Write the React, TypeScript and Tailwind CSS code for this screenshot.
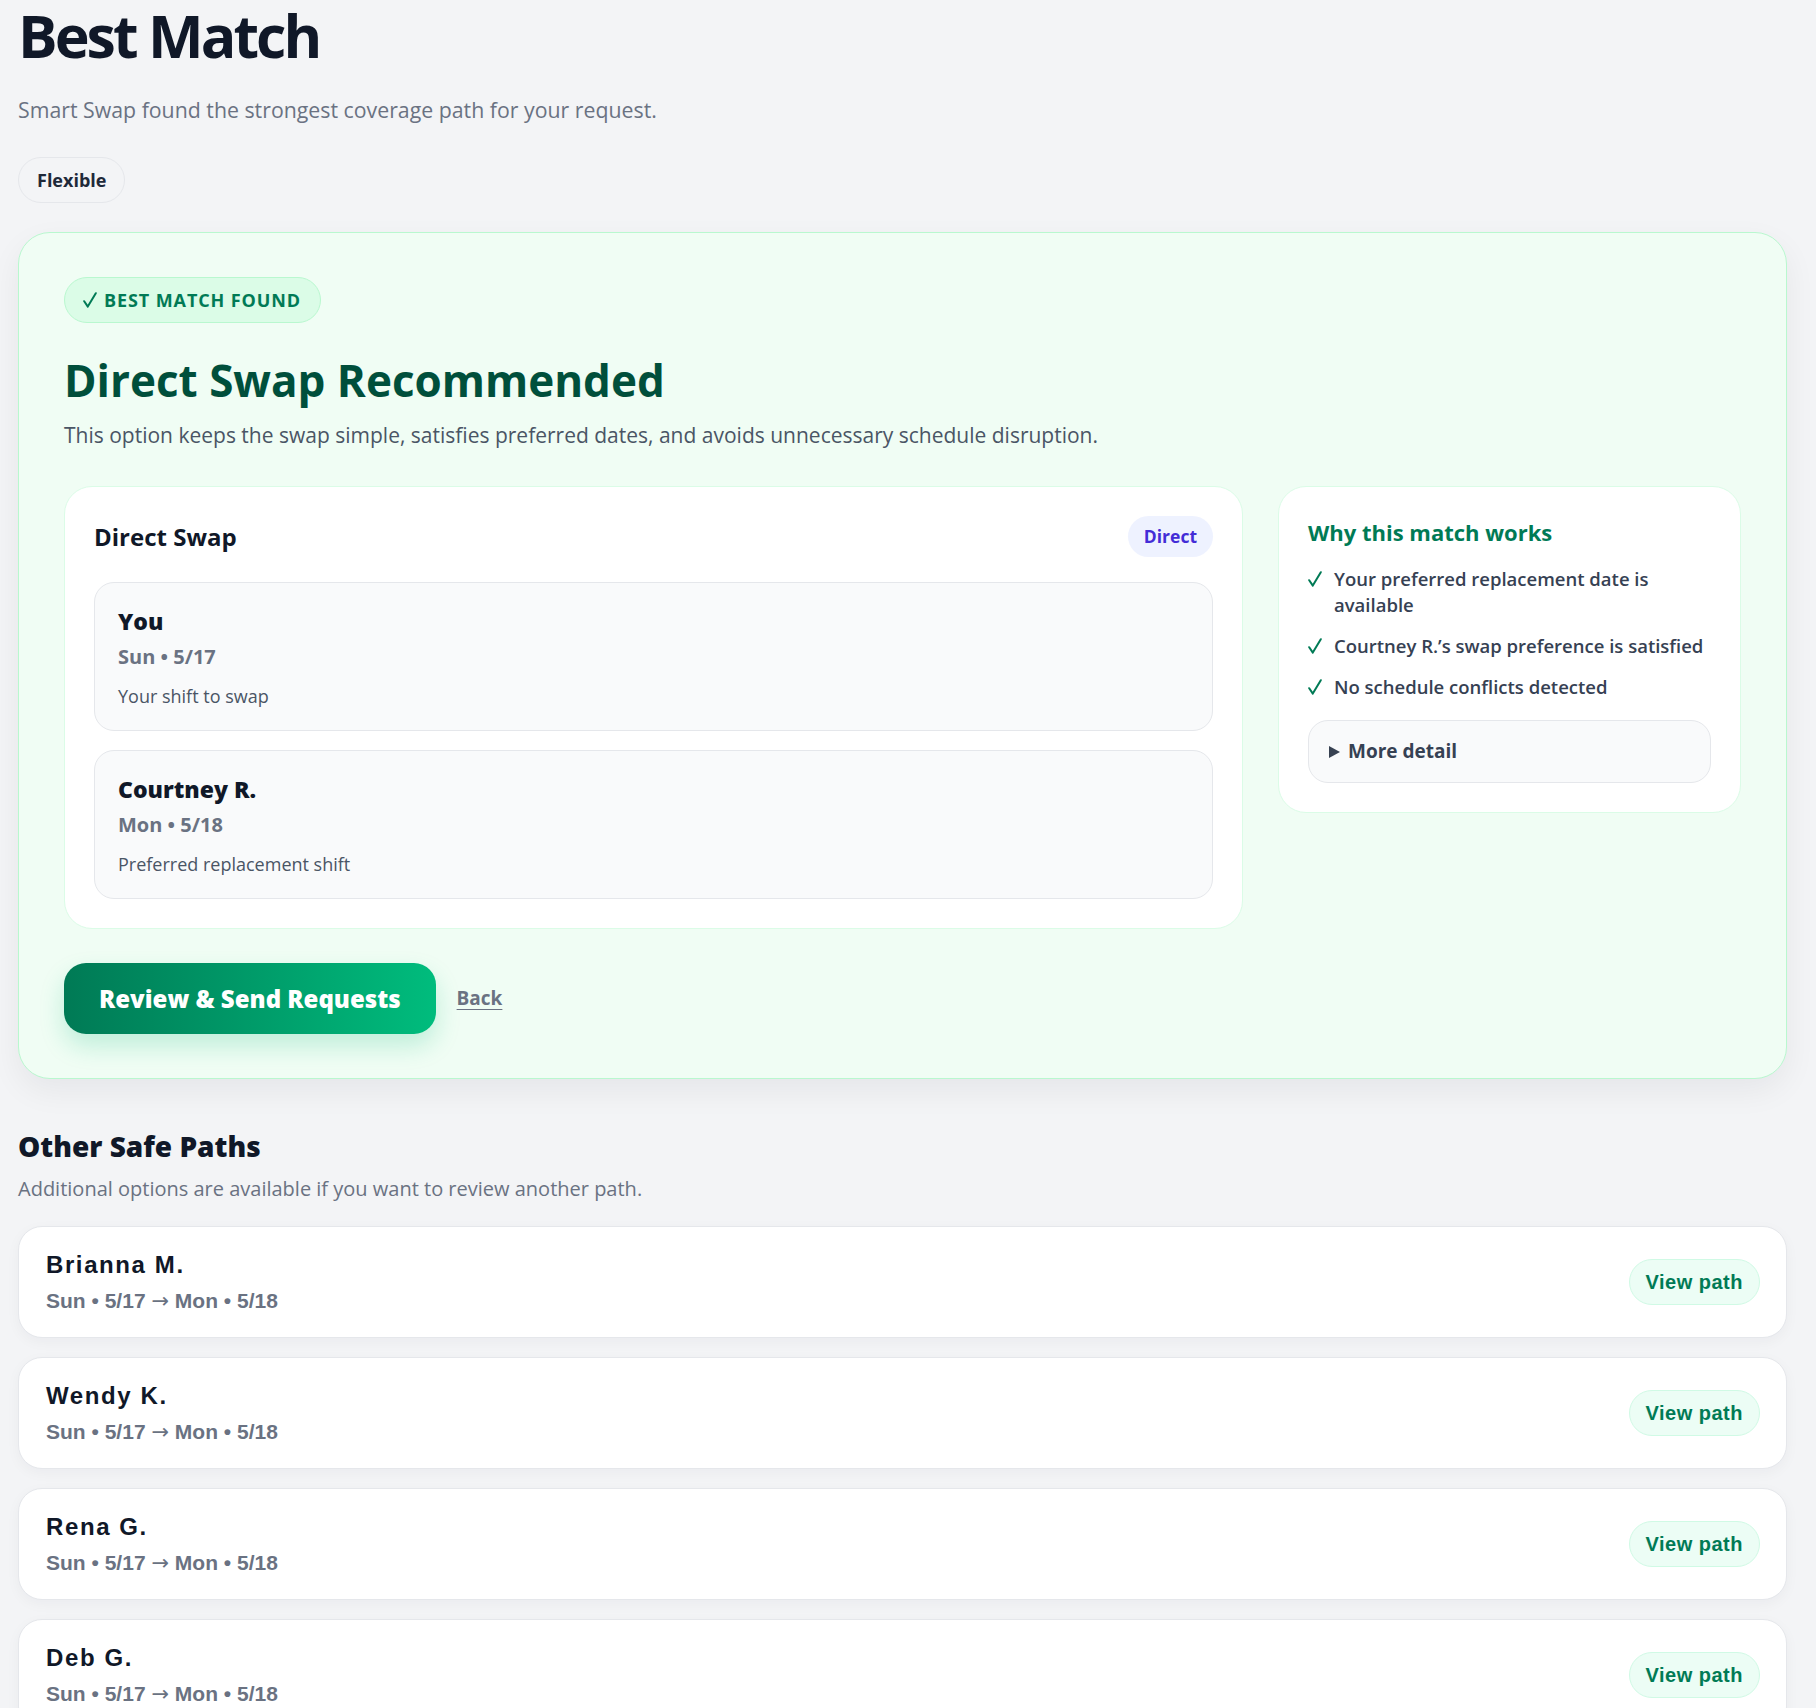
import React from 'react';

const otherPaths = [
  { name: 'Brianna M.', from: 'Sun • 5/17', to: 'Mon • 5/18' },
  { name: 'Wendy K.', from: 'Sun • 5/17', to: 'Mon • 5/18' },
  { name: 'Rena G.', from: 'Sun • 5/17', to: 'Mon • 5/18' },
  { name: 'Deb G.', from: 'Sun • 5/17', to: 'Mon • 5/18' },
];

const reasons = [
  'Your preferred replacement date is available',
  'Courtney R.’s swap preference is satisfied',
  'No schedule conflicts detected',
];

// thin "√" style check used in the badge and the reasons list
const Check = ({ className }: { className?: string }) => (
  <svg width="14" height="16" viewBox="0 0 14 16" className={className} fill="none">
    <path d="M1.2 9.2 L4.8 14.6 L12.8 1.2" stroke="currentColor" strokeWidth="2" strokeLinecap="round" strokeLinejoin="round" />
  </svg>
);

const ShiftCard = ({ who, when, note }: { who: string; when: string; note: string }) => (
  <div className="rounded-[20px] border border-gray-200 bg-gray-50 pl-[23px] pr-6 pt-[23px] pb-[21px]">
    <div className="text-[23px] font-extrabold leading-[30px] text-gray-900">{who}</div>
    <div className="mt-[8px] text-[20px] font-bold leading-[26px] text-gray-500">{when}</div>
    <div className="mt-[13px] text-[18px] leading-[26px] text-gray-600">{note}</div>
  </div>
);

const App = () => {
  return (
    <div className="min-h-screen bg-[#f3f4f6] pl-[18px] pr-[29px] pt-[6px] pb-10 font-['Open_Sans',sans-serif]">
      {/* Header */}
      <h1 className="text-[59px] font-bold leading-none tracking-[-0.05em] text-gray-900">Best Match</h1>
      <p className="mt-[31px] text-[21.3px] leading-[28px] text-gray-500">
        Smart Swap found the strongest coverage path for your request.
      </p>
      <div className="mt-[33px]">
        <span className="inline-flex h-[46px] items-center rounded-full border border-gray-200 px-[18px] text-[18px] font-bold text-gray-800">
          Flexible
        </span>
      </div>

      {/* Best match card */}
      <section className="mt-[29px] rounded-[32px] border border-green-200 bg-green-50 px-[45px] pt-[44px] pb-[44px] shadow-[0_12px_32px_rgba(15,23,42,0.06)]">
        <span className="inline-flex h-[46px] items-center rounded-full border border-green-200 bg-green-100 pl-[18px] pr-[19px] text-[18px] font-bold uppercase tracking-[0.05em] text-emerald-700">
          <Check className="mr-[7px]" />
          Best Match Found
        </span>
        <h2 className="mt-[31px] text-[44px] font-bold leading-[52px] text-emerald-900">Direct Swap Recommended</h2>
        <p className="mt-[15px] text-[21px] leading-[28px] text-gray-600">
          This option keeps the swap simple, satisfies preferred dates, and avoids unnecessary schedule disruption.
        </p>

        <div className="mt-[37px] grid grid-cols-[minmax(0,1fr)_463px] items-start gap-[35px]">
          <div className="rounded-[28px] border border-green-100 bg-white p-[29px]">
            <div className="flex items-center justify-between">
              <h3 className="text-[24px] font-bold leading-[30px] text-gray-900">Direct Swap</h3>
              <span className="inline-flex h-[41px] items-center rounded-full bg-indigo-50 px-[16px] text-[17.5px] font-bold text-indigo-700">
                Direct
              </span>
            </div>
            <div className="mt-[25px] flex flex-col gap-[19px]">
              <ShiftCard who="You" when="Sun • 5/17" note="Your shift to swap" />
              <ShiftCard who="Courtney R." when="Mon • 5/18" note="Preferred replacement shift" />
            </div>
          </div>

          <div className="rounded-[28px] border border-green-100 bg-white px-[29px] pt-[31px] pb-[29px]">
            <h3 className="text-[22px] font-bold leading-[28px] text-emerald-700">Why this match works</h3>
            <ul className="mt-[20px] flex flex-col gap-[15px]">
              {reasons.map((r) => (
                <li key={r} className="flex text-[18.5px] font-semibold leading-[26px] text-gray-700">
                  <span className="flex h-[26px] w-[26px] shrink-0 items-center text-emerald-700">
                    <Check />
                  </span>
                  <span>{r}</span>
                </li>
              ))}
            </ul>
            <div className="mt-[20px] flex h-[63px] items-center rounded-[20px] border border-gray-200 bg-gray-50 px-[20px]">
              <svg width="11" height="12" viewBox="0 0 11 12" className="mr-[8px]">
                <polygon points="0,0 11,6 0,12" fill="#374151" />
              </svg>
              <span className="text-[19px] font-bold text-gray-700">More detail</span>
            </div>
          </div>
        </div>

        <div className="mt-[34px] flex items-center gap-[21px]">
          <button className="h-[71px] rounded-[22px] bg-gradient-to-r from-emerald-700 to-emerald-500 px-[35px] text-[24px] font-extrabold text-white shadow-[0_12px_24px_rgba(16,185,129,0.22)]">
            Review &amp; Send Requests
          </button>
          <a href="#" className="text-[19px] font-bold text-gray-500 underline underline-offset-4">
            Back
          </a>
        </div>
      </section>

      {/* Other paths */}
      <h2 className="mt-[49px] text-[28px] font-extrabold leading-[36px] text-gray-900">Other Safe Paths</h2>
      <p className="mt-[11px] text-[20px] leading-[28px] text-gray-500">
        Additional options are available if you want to review another path.
      </p>
      <div className="mt-[23px] flex flex-col gap-[19px] font-['Liberation_Sans',Arial,sans-serif]">
        {otherPaths.map((p) => (
          <div
            key={p.name}
            className="flex h-[112px] items-center justify-between rounded-[24px] border border-gray-200 bg-white pl-[27px] pr-[26px] shadow-[0_4px_14px_rgba(15,23,42,0.04)]"
          >
            <div>
              <div className="text-[24px] font-bold leading-[28px] tracking-[1.6px] text-gray-900">{p.name}</div>
              <div className="mt-[9px] text-[21px] font-bold leading-[26px] text-gray-500">
                {p.from} <span className="font-['DejaVu_Sans',sans-serif] font-normal">→</span> {p.to}
              </div>
            </div>
            <button className="inline-flex h-[46px] items-center rounded-full border border-emerald-100 bg-emerald-50 px-[16px] text-[20px] font-bold tracking-[0.5px] text-emerald-700">
              View path
            </button>
          </div>
        ))}
      </div>
    </div>
  );
};

export default App;
